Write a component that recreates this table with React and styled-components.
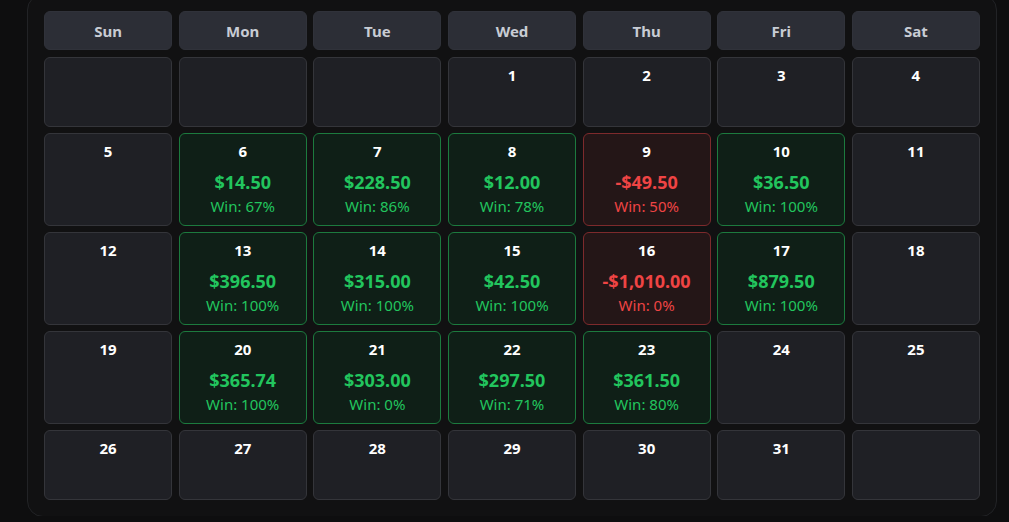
import React from "react";
import styled, { createGlobalStyle, css } from "styled-components";

const Global = createGlobalStyle`
  html, body { margin: 0; padding: 0; background: #0e0e0f; }
  body { font-family: "Segoe UI", "Noto Sans", "Open Sans", sans-serif; overflow: hidden; }
`;

const Page = styled.div`
  padding: 0 12px 0 27px;
  height: 522px;
  box-sizing: border-box;
`;

const Panel = styled.div`
  margin-top: -6px;
  background: #111112;
  border: 1px solid #222326;
  border-radius: 16px;
  padding: 16px;
  box-sizing: border-box;
  width: 970px;
`;

const Grid = styled.div`
  display: grid;
  grid-template-columns: repeat(7, 1fr);
  column-gap: 6.5px;
  row-gap: 6.5px;
`;

const Head = styled.div`
  height: 39px;
  display: flex;
  align-items: center;
  justify-content: center;
  background: #2c2e36;
  border: 1px solid #30323a;
  box-sizing: border-box;
  border-radius: 6px;
  color: #c8ccd4;
  font-weight: 700;
  font-size: 15px;
`;

const tones = {
  empty: css`
    background: #1f2025;
    border-color: #34353a;
  `,
  win: css`
    background: #0f1f17;
    border-color: #1c7a3e;
  `,
  loss: css`
    background: #241617;
    border-color: #7d2a2c;
  `,
};

const Cell = styled.div`
  min-height: 70px;
  box-sizing: border-box;
  border: 1px solid;
  border-radius: 6px;
  display: flex;
  flex-direction: column;
  align-items: center;
  padding-top: 7px;
  ${(p) => tones[p.$tone]}
`;

const Day = styled.div`
  color: #ffffff;
  font-weight: 700;
  font-size: 15px;
  line-height: 20px;
`;

const Amount = styled.div`
  margin-top: 10px;
  font-weight: 700;
  font-size: 18px;
  line-height: 22px;
  color: ${(p) => (p.$loss ? "#ef4444" : "#22c55e")};
`;

const Rate = styled.div`
  margin-top: 3px;
  font-size: 15px;
  line-height: 20px;
  color: ${(p) => (p.$loss ? "#ef4444" : "#22c55e")};
  padding-bottom: 8.5px;
`;

const heads = ["Sun", "Mon", "Tue", "Wed", "Thu", "Fri", "Sat"];

const data = {
  6: ["$14.50", "67%"],
  7: ["$228.50", "86%"],
  8: ["$12.00", "78%"],
  9: ["-$49.50", "50%", true],
  10: ["$36.50", "100%"],
  13: ["$396.50", "100%"],
  14: ["$315.00", "100%"],
  15: ["$42.50", "100%"],
  16: ["-$1,010.00", "0%", true],
  17: ["$879.50", "100%"],
  20: ["$365.74", "100%"],
  21: ["$303.00", "0%"],
  22: ["$297.50", "71%"],
  23: ["$361.50", "80%"],
};

const cells = [null, null, null];
for (let d = 1; d <= 31; d++) cells.push(d);
cells.push(null);

export default function App() {
  return (
    <Page>
      <Global />
      <Panel>
        <Grid>
          {heads.map((h) => (
            <Head key={h}>{h}</Head>
          ))}
          {cells.map((d, i) => {
            const e = d && data[d];
            const tone = e ? (e[2] ? "loss" : "win") : "empty";
            return (
              <Cell key={i} $tone={tone}>
                {d && <Day>{d}</Day>}
                {e && <Amount $loss={e[2]}>{e[0]}</Amount>}
                {e && <Rate $loss={e[2]}>Win: {e[1]}</Rate>}
              </Cell>
            );
          })}
        </Grid>
      </Panel>
    </Page>
  );
}
